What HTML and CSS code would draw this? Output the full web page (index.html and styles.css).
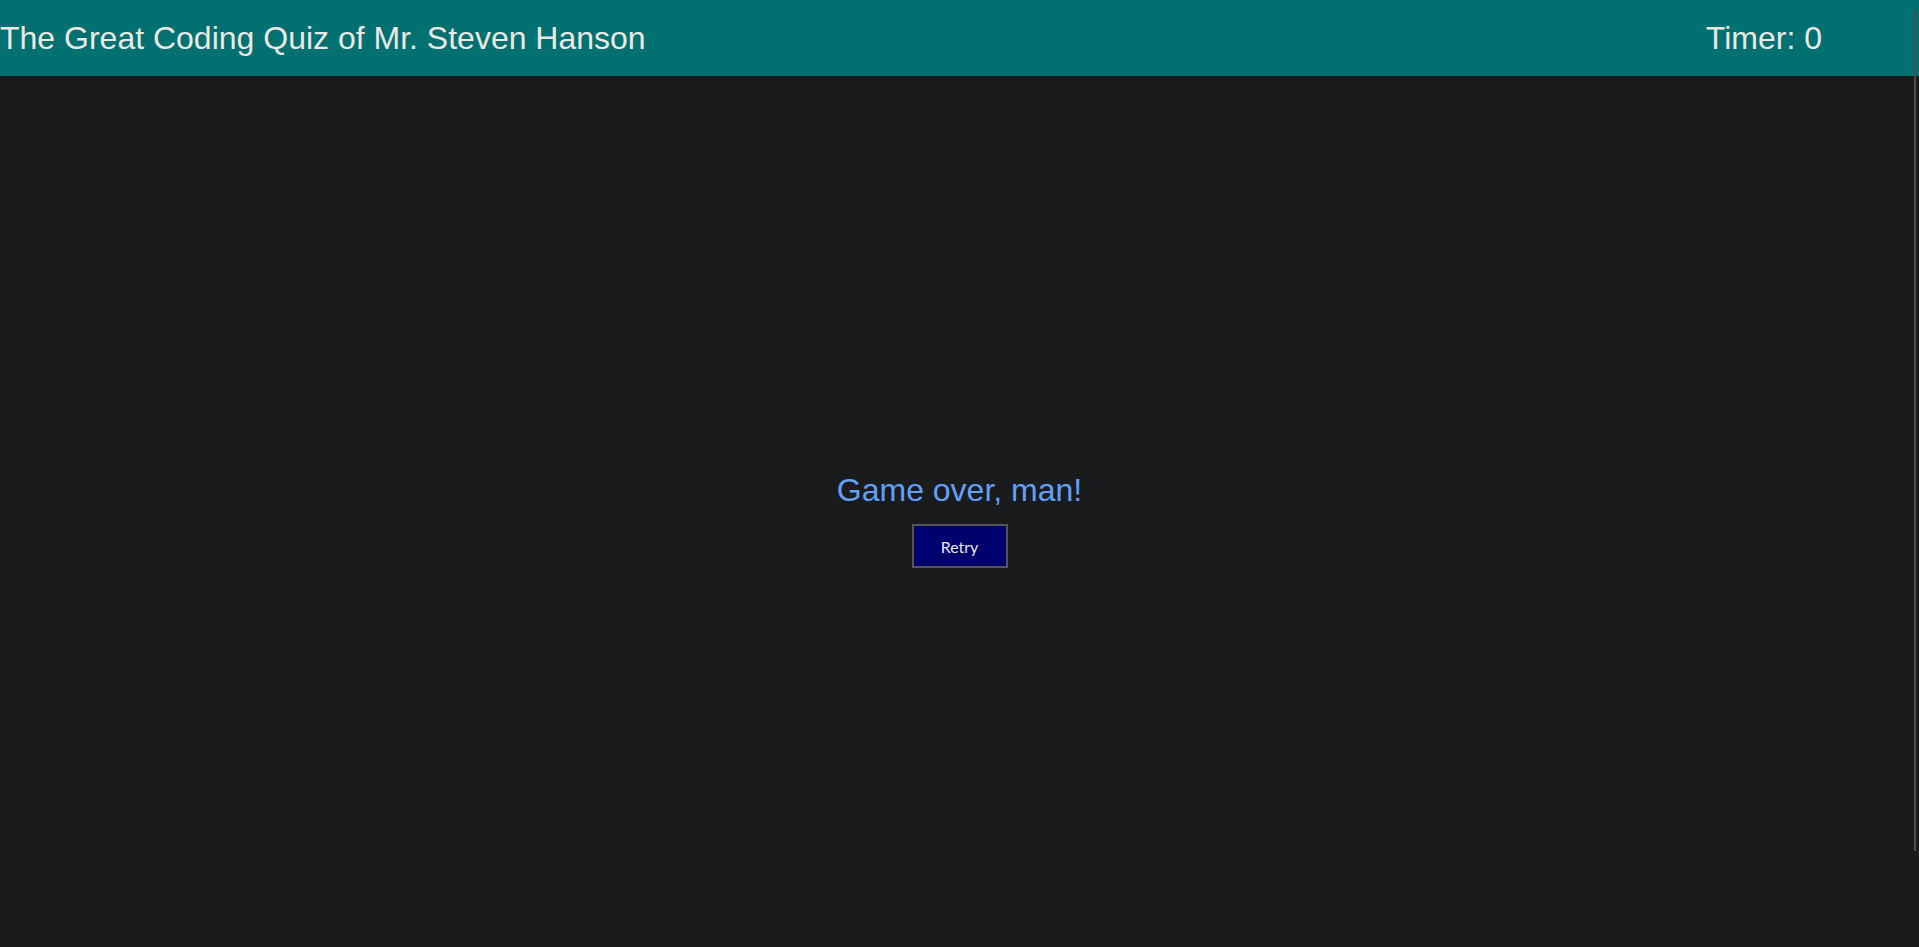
FILE: index.html
```html
<!DOCTYPE html>
<html lang="en">
<head>
<meta charset="utf-8">
<title>The Great Coding Quiz</title>
<link rel="stylesheet" href="styles.css">
</head>
<body>
<header class="topbar">
  <h1 class="title">The Great Coding Quiz of Mr. Steven Hanson</h1>
  <div class="timer">Timer: 0</div>
</header>
<main class="stage">
  <h2 class="gameover">Game over, man!</h2>
  <button class="retry" type="button">Retry</button>
</main>
<div class="scroll-thumb"></div>
</body>
</html>
```

FILE: styles.css
```css
html, body {
  margin: 0;
  padding: 0;
  height: 100%;
  overflow: hidden;
}
body {
  background: #1a1b1d;
  color: #e8e6e3;
  font-family: "Liberation Sans", Arial, sans-serif;
}
.topbar {
  display: flex;
  justify-content: space-between;
  align-items: center;
  height: 76px;
  padding-right: 97px;
  background: #007070;
}
.title, .timer {
  margin: 0;
  font-size: 32px;
  font-weight: normal;
  line-height: 37px;
  color: #ebe8e3;
}
.stage {
  display: flex;
  flex-direction: column;
  align-items: center;
  padding-top: 396px;
}
.gameover {
  margin: 0;
  font-size: 32px;
  font-weight: normal;
  line-height: 37px;
  color: #62a0f5;
}
.retry {
  margin-top: 15px;
  width: 96px;
  height: 44px;
  box-sizing: border-box;
  border: 2px solid #565656;
  background: #00006e;
  color: #e8e6e3;
  font-family: Lato, "Open Sans", sans-serif;
  font-size: 16px;
  padding: 0;
  cursor: pointer;
}
.scroll-thumb {
  position: fixed;
  top: 10px;
  right: 3px;
  width: 2px;
  height: 841px;
  background: #4a4e4f;
}
```
